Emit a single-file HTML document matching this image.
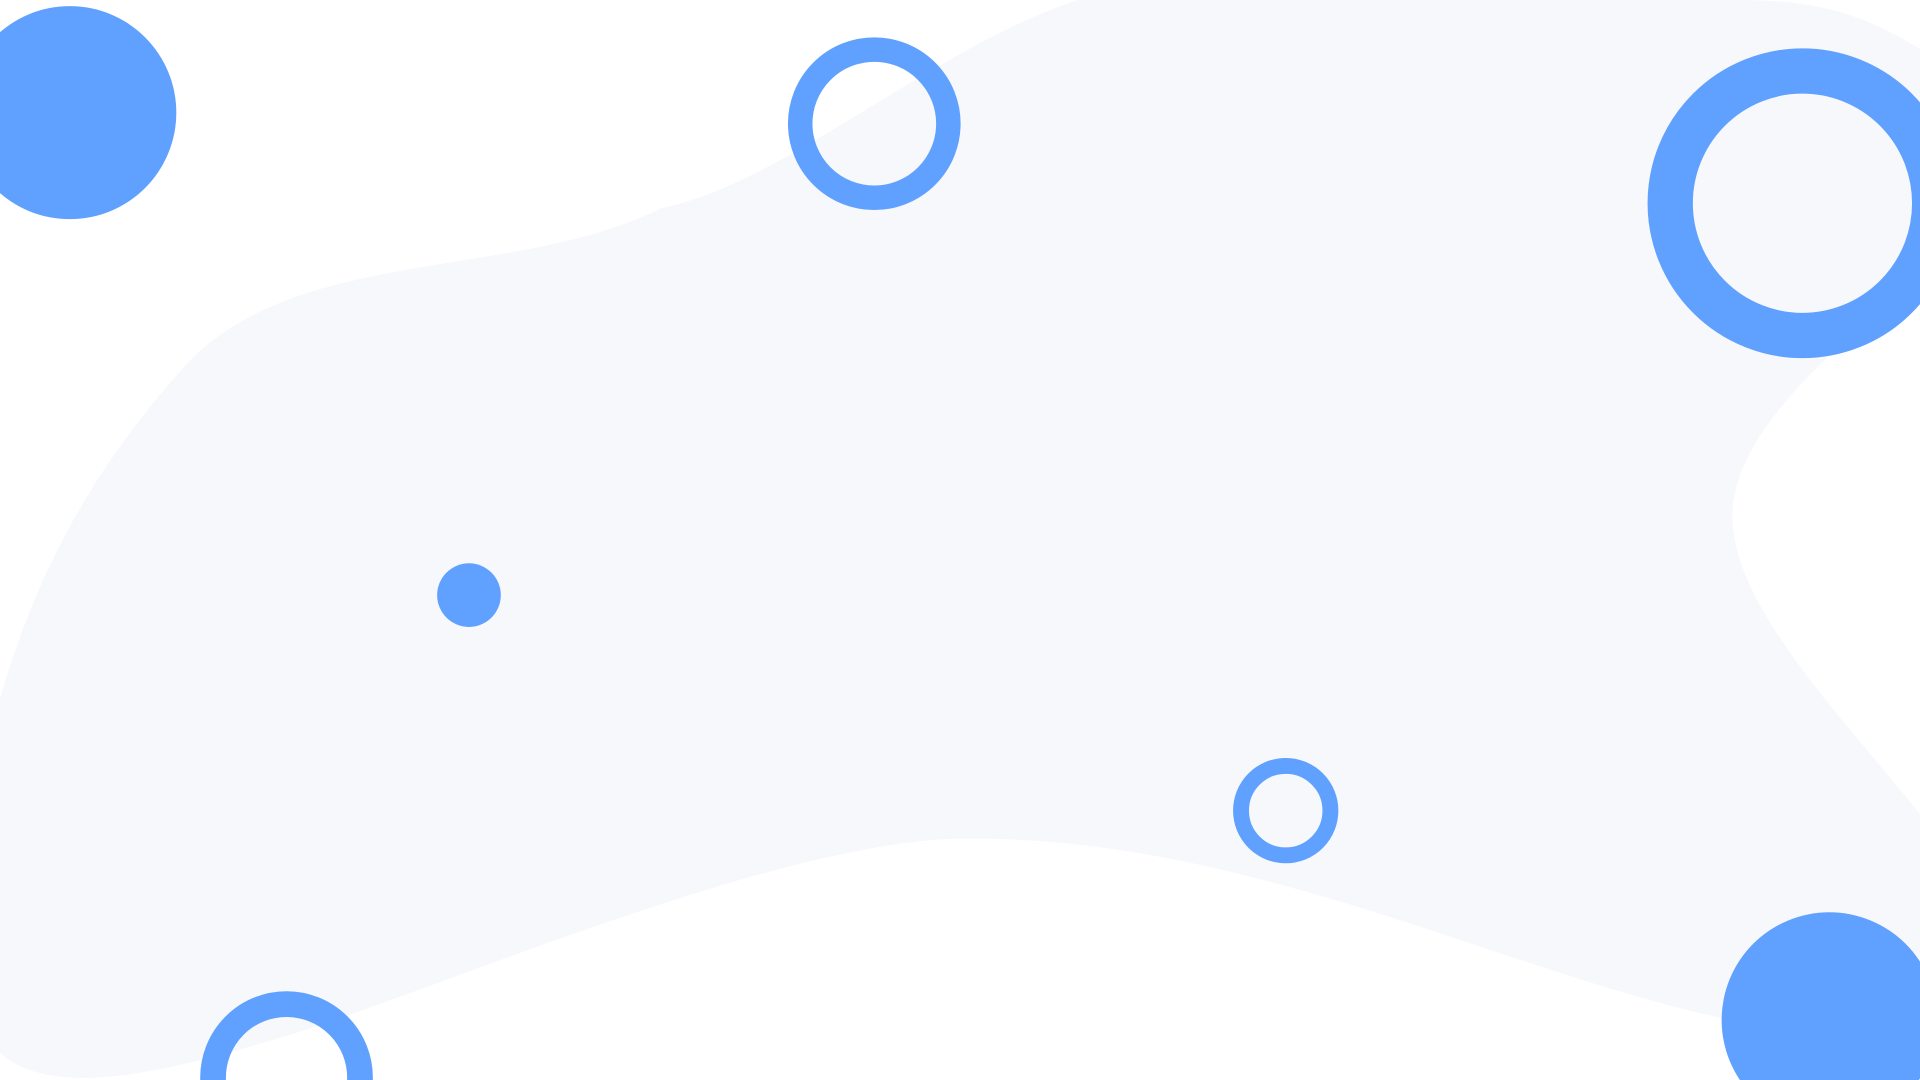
<!DOCTYPE html>
<html><head><meta charset="utf-8"><style>html,body{margin:0;padding:0;background:#fff;overflow:hidden;width:1920px;height:1080px}svg{display:block;overflow:hidden}</style></head>
<body>
<svg width="1920" height="1080" viewBox="0 0 1568 882" preserveAspectRatio="none" overflow="hidden" xmlns="http://www.w3.org/2000/svg">
<path fill="#f7f8fc" d="M880,0 C760,40 640,150 540,170 C420,230 240,200 150,300 C70,390 30,470 0,570 L0,860 C40,895 120,880 220,850 C330,820 620,690 780,685 C1010,680 1220,790 1400,830 C1480,845 1540,860 1568,850 L1568,665 C1500,580 1410,490 1415,415 C1420,350 1500,280 1568,230 L1568,40 C1520,10 1480,0 1420,0 Z"/>
<g fill="#60a1ff">
<circle cx="57" cy="92" r="87"/>
<circle cx="383" cy="486" r="26"/>
<circle cx="1494" cy="833" r="88"/>
</g>
<g fill="none" stroke="#60a1ff">
<circle cx="714" cy="101" r="60.5" stroke-width="20"/>
<circle cx="1472" cy="166" r="108" stroke-width="37"/>
<circle cx="1050" cy="662" r="36.5" stroke-width="13"/>
<circle cx="234" cy="880" r="60" stroke-width="21"/>
</g>
</svg>
</body></html>
